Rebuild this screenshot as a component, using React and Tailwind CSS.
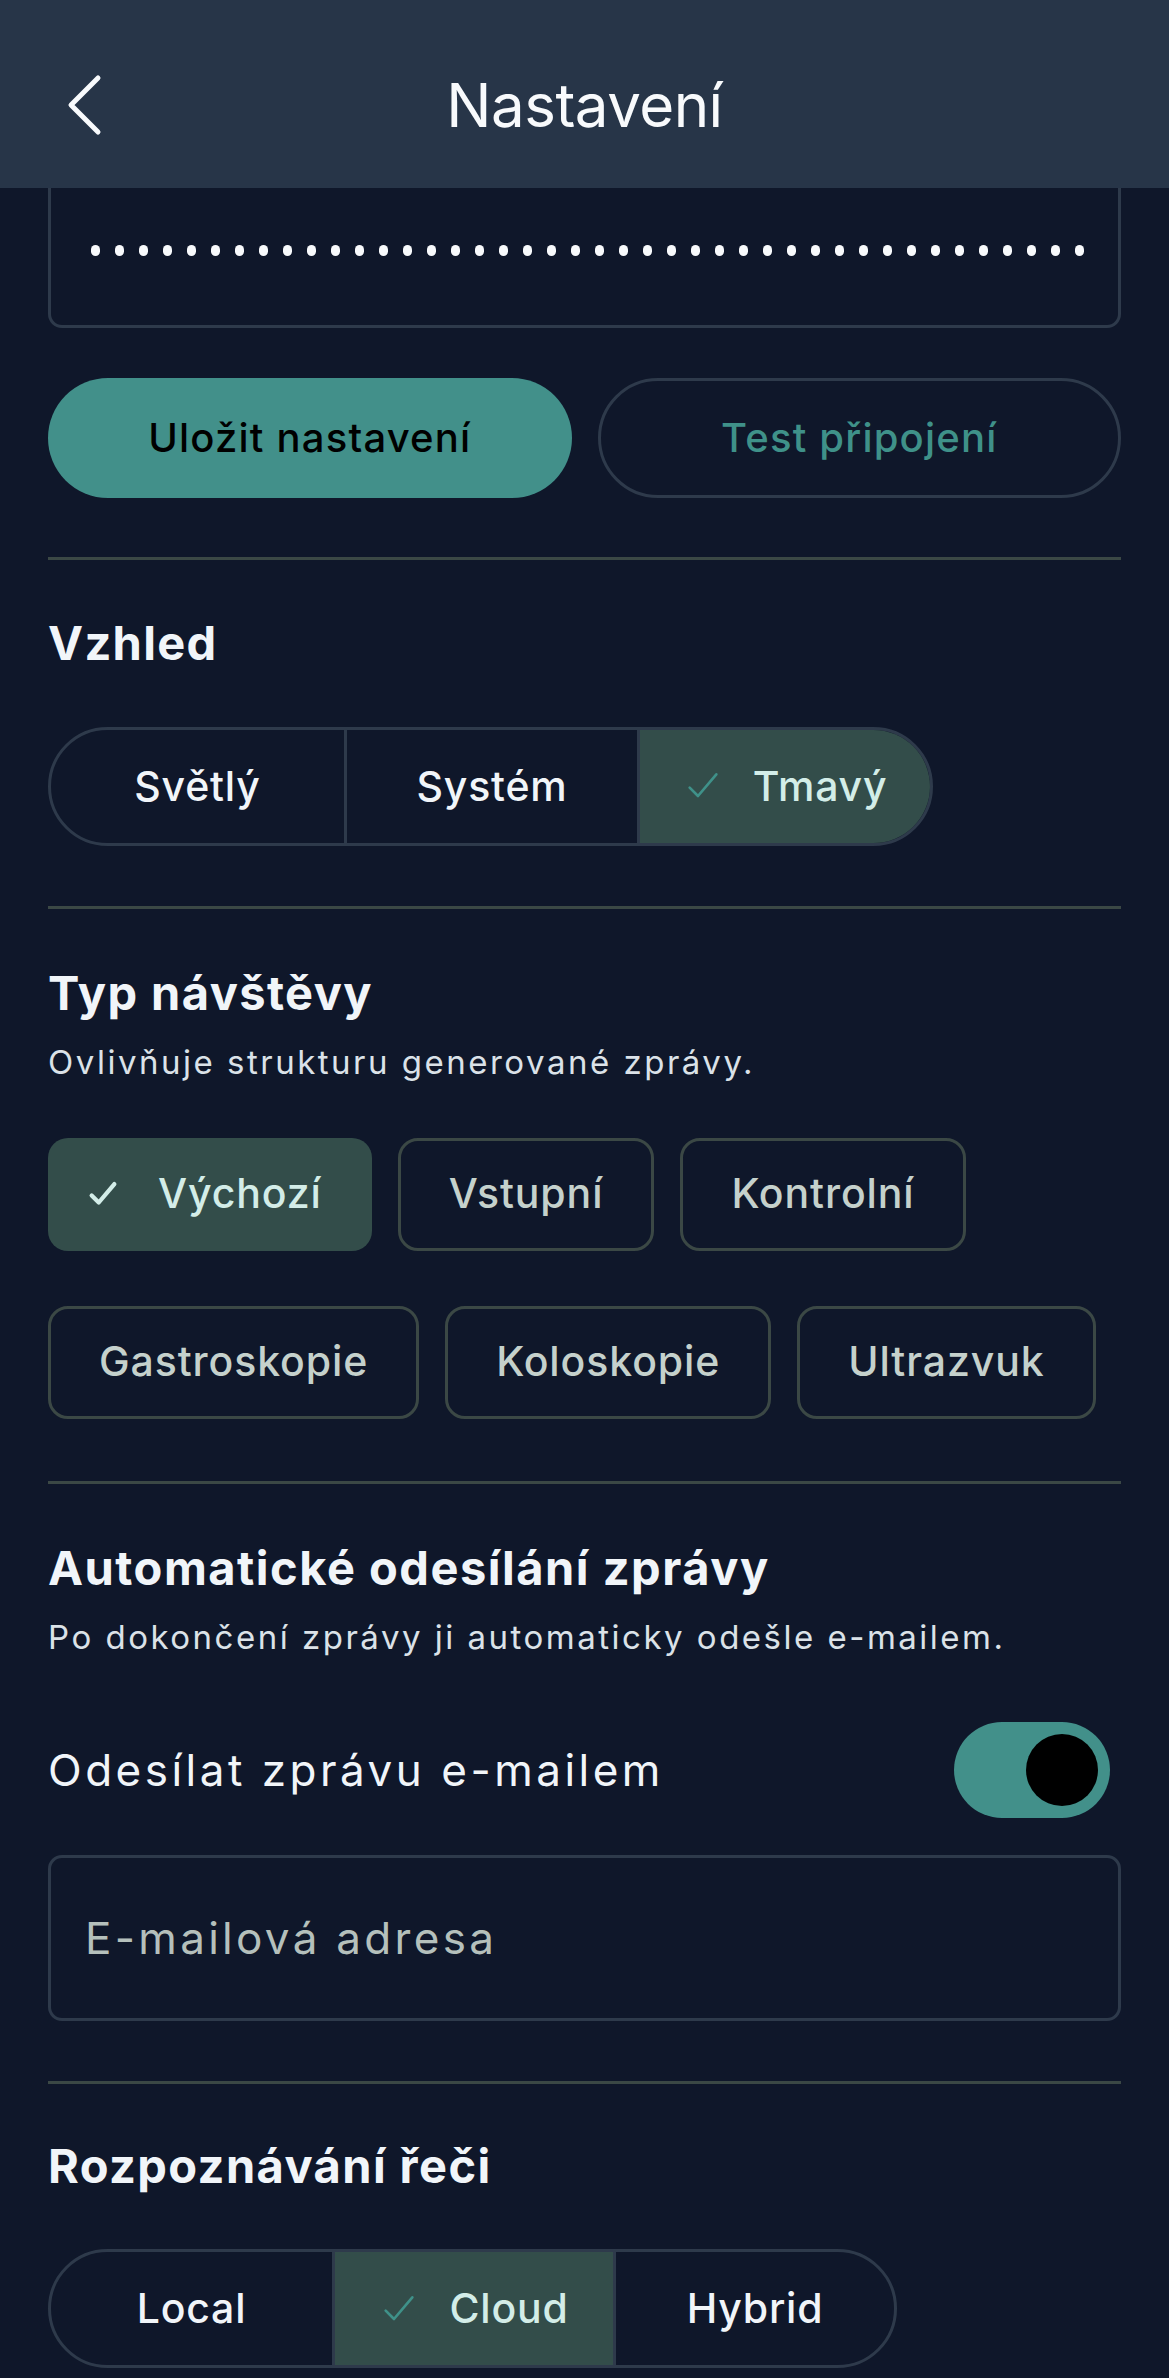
import { useState } from 'react'

const font = { fontFamily: 'Inter, "Noto Sans", sans-serif' }

function CheckIcon({ className, strokeWidth = 2 }) {
  return (
    <svg className={className} viewBox="0 0 24 24" fill="none" stroke="currentColor" strokeWidth={strokeWidth} strokeLinecap="round" strokeLinejoin="round">
      <path d="M4 13l5 5L20 5" />
    </svg>
  )
}

function Segmented({ options, value, onChange, segWidth }) {
  return (
    <div className="inline-flex h-[119px] rounded-full border-[3px] border-[#2e3a4b] overflow-hidden">
      {options.map((opt, i) => {
        const active = opt === value
        return (
          <button
            key={opt}
            type="button"
            onClick={() => onChange(opt)}
            className={`${segWidth} flex items-center justify-center gap-[30px] text-[41px] font-medium tracking-[0.8px] ${
              i > 0 ? 'border-l-[3px] border-[#2e3a4b]' : ''
            } ${active ? 'bg-[#334d4a] text-[#d3ede8]' : 'text-[#f1f5f9]'}`}
          >
            {active && <CheckIcon className="w-[40px] h-[40px] text-[#3f9189]" strokeWidth={1.6} />}
            {opt}
          </button>
        )
      })}
    </div>
  )
}

function Chip({ label, active, onClick }) {
  return (
    <button
      type="button"
      onClick={onClick}
      className={`h-[113px] rounded-[20px] flex items-center text-[41px] font-medium tracking-[0.9px] ${
        active
          ? 'bg-[#334d4a] text-[#d3ede8] pl-[38px] pr-[50px] gap-[38px]'
          : 'border-[3px] border-[#3b4845] text-[#c5d1cc] px-[48px]'
      }`}
    >
      {active && <CheckIcon className="w-[34px] h-[34px]" strokeWidth={3} />}
      {label}
    </button>
  )
}

function Divider({ className = '' }) {
  return <div className={`h-[3px] bg-[#3b4845] ${className}`} />
}

export default function App() {
  const [theme, setTheme] = useState('Tmavý')
  const [visit, setVisit] = useState('Výchozí')
  const [autoSend, setAutoSend] = useState(true)
  const [stt, setStt] = useState('Cloud')

  const visitTypes = [
    ['Výchozí', 'Vstupní', 'Kontrolní'],
    ['Gastroskopie', 'Koloskopie', 'Ultrazvuk'],
  ]

  return (
    <div className="relative w-full min-h-[2378px] bg-[#0f172a] text-[#f1f5f9] overflow-hidden" style={font}>
      <header className="absolute top-0 left-0 right-0 h-[188px] bg-[#273548] z-10">
        <div className="relative mt-[60px] h-[90px] flex items-center justify-center">
          <button type="button" className="absolute left-[64px] top-[14px] text-[#f8fafc]" aria-label="Zpět">
            <svg width="40" height="62" viewBox="0 0 40 62" fill="none" stroke="currentColor" strokeWidth="5" strokeLinecap="round" strokeLinejoin="round">
              <path d="M34 4 L7 31 L34 58" />
            </svg>
          </button>
          <h1 className="text-[60px] font-normal tracking-[-0.5px] text-[#f8fafc]">Nastavení</h1>
        </div>
      </header>

      <main className="pt-[162px] px-[48px] pb-[10px]">
        <div className="h-[166px] rounded-[14px] border-[3px] border-[#2e3a4b] flex items-center pl-[40px] pr-[32px]">
          <div className="flex-1 overflow-hidden flex gap-[15px] mt-[10px]">
            {Array.from({ length: 45 }).map((_, i) => (
              <span key={i} className="shrink-0 w-[9px] h-[11px] rounded-full bg-[#f8fafc]" />
            ))}
          </div>
        </div>

        <div className="mt-[50px] grid grid-cols-2 gap-[26px]">
          <button type="button" className="h-[120px] rounded-full bg-[#42908a] text-black text-[40px] font-medium tracking-[1.2px]">
            Uložit nastavení
          </button>
          <button type="button" className="h-[120px] rounded-full border-[3px] border-[#2e3a4b] text-[#3f9189] text-[40px] font-medium tracking-[1.2px]">
            Test připojení
          </button>
        </div>

        <Divider className="mt-[59px]" />

        <h2 className="mt-[55px] text-[47px] leading-[1.21] font-bold tracking-[1.3px]">Vzhled</h2>
        <div className="mt-[55px]">
          <Segmented options={['Světlý', 'Systém', 'Tmavý']} value={theme} onChange={setTheme} segWidth="w-[293px]" />
        </div>

        <Divider className="mt-[60px]" />

        <h2 className="mt-[56px] text-[47px] leading-[1.21] font-bold tracking-[1.4px]">Typ návštěvy</h2>
        <p className="mt-[21px] text-[33px] leading-[1.21] tracking-[2.5px] text-[#dbe2e8]">Ovlivňuje strukturu generované zprávy.</p>

        <div className="mt-[55px] flex flex-col gap-[55px]">
          {visitTypes.map((row, r) => (
            <div key={r} className="flex gap-[26px]">
              {row.map((v) => (
                <Chip key={v} label={v} active={visit === v} onClick={() => setVisit(v)} />
              ))}
            </div>
          ))}
        </div>

        <Divider className="mt-[62px]" />

        <h2 className="mt-[56px] text-[47px] leading-[1.21] font-bold tracking-[1.5px]">Automatické odesílání zprávy</h2>
        <p className="mt-[21px] text-[33px] leading-[1.21] tracking-[2.5px] text-[#dbe2e8]">
          Po dokončení zprávy ji automaticky odešle e-mailem.
        </p>

        <div className="mt-[65px] h-[96px] flex items-center justify-between">
          <span className="text-[44px] tracking-[3.5px]">Odesílat zprávu e-mailem</span>
          <button
            type="button"
            onClick={() => setAutoSend(!autoSend)}
            className={`w-[156px] h-[96px] rounded-full flex items-center px-[12px] mr-[11px] ${
              autoSend ? 'bg-[#42908a] justify-end' : 'bg-[#2e3a4b] justify-start'
            }`}
            aria-label="Odesílat zprávu e-mailem"
          >
            <span className="w-[72px] h-[72px] rounded-full bg-black" />
          </button>
        </div>

        <div className="mt-[37px] h-[166px] rounded-[14px] border-[3px] border-[#2e3a4b] flex items-center px-[34px]">
          <span className="text-[44px] tracking-[3.3px] text-[#b5c0bc]">E-mailová adresa</span>
        </div>

        <Divider className="mt-[60px]" />

        <h2 className="mt-[54px] text-[47px] leading-[1.21] font-bold tracking-[1.4px]">Rozpoznávání řeči</h2>
        <div className="mt-[54px]">
          <Segmented options={['Local', 'Cloud', 'Hybrid']} value={stt} onChange={setStt} segWidth="w-[281px]" />
        </div>
      </main>
    </div>
  )
}
